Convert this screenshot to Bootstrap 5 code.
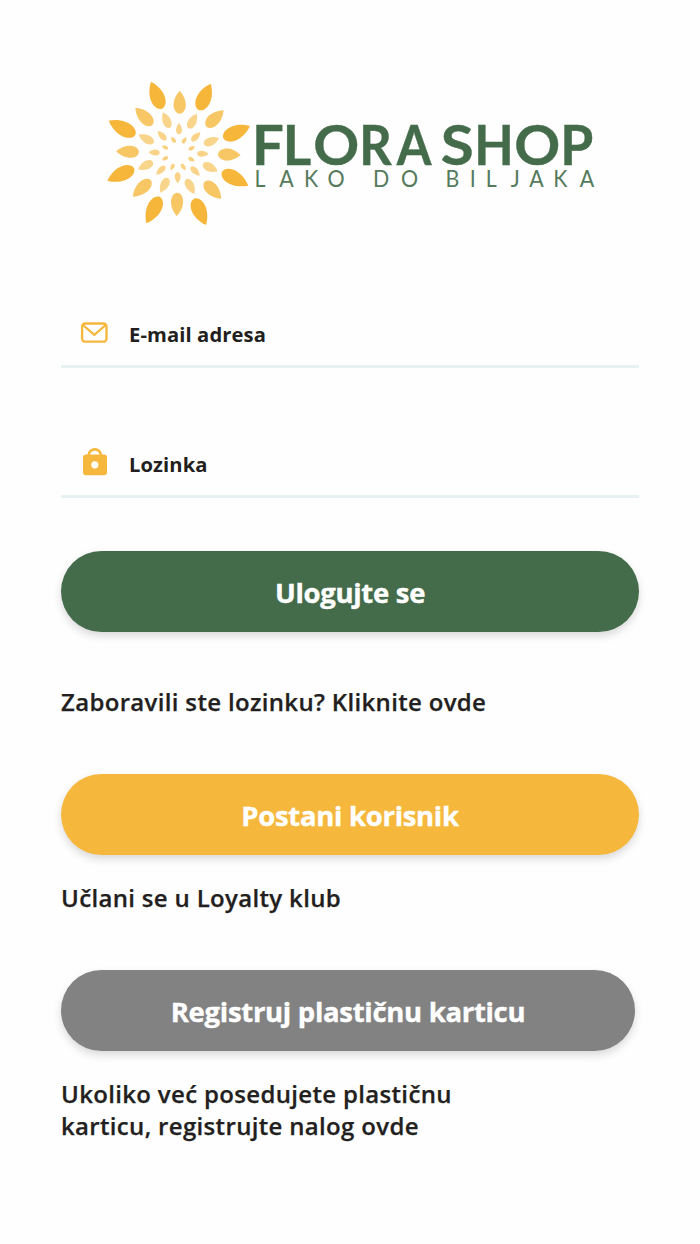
<!DOCTYPE html>
<html lang="sr-Latn">
<head>
<meta charset="utf-8">
<meta name="viewport" content="width=device-width, initial-scale=1">
<title>Flora Shop</title>
<link rel="stylesheet" href="https://cdn.jsdelivr.net/npm/bootstrap@5.3.0/dist/css/bootstrap.min.css">
<style>
body { font-family: "Open Sans", sans-serif; color: #231f20; background: #fefefe; }
.login-page { width: 700px; height: 1244px; padding: 70px 61px 0; }
.brand-logo { width: 578px; height: 165px; }
.brand-logo text { font-family: Lato, sans-serif; fill: #446c4b; }
.brand-name { font-size: 56.2px; font-weight: 700; stroke: #446c4b; stroke-width: .4px; }
.brand-tag { font-size: 23px; font-weight: 400; opacity: .9; }
.field-row { height: 73px; border-bottom: 3px solid #e8f1f1; padding-left: 19px; }
.field-row + .field-row { margin-top: 57px; }
.field-row svg { margin-top: 3px; }
.field-row label { font-size: 20.2px; font-weight: 700; line-height: 30px; letter-spacing: .1px; margin: 7px 0 0 21px; }
.btn-pill { height: 81px; font-size: 27.5px; font-weight: 700; letter-spacing: -.3px; -webkit-text-stroke: .4px #fff; color: #fff; box-shadow: 0 4px 8px rgba(0,0,0,.15); padding: 2px 0 0; border: 0; }
.btn-login { background: #446c4b; }
.btn-join { background: #f5b83d; }
.btn-card { background: #828282; width: 574px; }
.note { font-size: 24px; font-weight: 600; line-height: 32px; letter-spacing: .33px; -webkit-text-stroke: .25px #231f20; }
</style>
</head>
<body>
<main class="login-page d-flex flex-column">
  <svg class="brand-logo flex-shrink-0" viewBox="61 70 578 165" role="img" aria-label="Flora Shop">
    <g id="sunburst" transform="translate(100 70) scale(.33333)"></g>
    <text id="name" class="brand-name" y="164.7"></text>
    <text class="brand-tag" y="187" transform="scale(.93 1)" x="273.7 300.2 326.8 352.1 370 401 431.2 450 479 505 522.4 549.2 569.2 595 623.5">LAKO DO BILJAKA</text>
  </svg>

  <form class="d-flex flex-column" style="margin-top:60px">
    <div class="field-row d-flex align-items-center">
      <svg width="28" height="30" viewBox="80 317 28 30" fill="none" stroke="#f5b83d" stroke-width="2.3" stroke-linejoin="round">
        <rect x="82.1" y="323.5" width="24.4" height="18.2" rx="3"/><path d="M83 325l11.3 9.8L105.7 325"/>
      </svg>
      <label>E-mail adresa</label>
    </div>
    <div class="field-row d-flex align-items-center">
      <svg width="28" height="30" viewBox="80 447 28 30">
        <path d="M88.8 457v-2.2a6 5.5 0 0 1 12 0v2.2" fill="none" stroke="#f5b83d" stroke-width="2.7"/>
        <rect x="83" y="454.5" width="24" height="20.7" rx="3" fill="#f5b83d"/><circle cx="94.8" cy="464.8" r="3.6" fill="#fff"/>
      </svg>
      <label>Lozinka</label>
    </div>
    <button type="button" class="btn btn-pill btn-login rounded-pill w-100" style="margin-top:53px"><span>Ulogujte se</span></button>
  </form>

  <p class="note mb-0" style="margin-top:54px"><span>Zaboravili ste lozinku? Kliknite ovde</span></p>
  <button type="button" class="btn btn-pill btn-join rounded-pill w-100" style="margin-top:56px"><span>Postani korisnik</span></button>
  <p class="note mb-0" style="margin-top:27px"><span>Učlani se u Loyalty klub</span></p>
  <button type="button" class="btn btn-pill btn-card rounded-pill" style="margin-top:56px"><span>Registruj plastičnu karticu</span></button>
  <p class="note mb-0" style="margin-top:27px"><span>Ukoliko već posedujete plastičnu</span><br><span>karticu, registrujte nalog ovde</span></p>
</main>
<script src="https://cdn.jsdelivr.net/npm/bootstrap@5.3.0/dist/js/bootstrap.bundle.min.js"></script>
<script>
const NS = 'http://www.w3.org/2000/svg';
// Wordmark letters: start x and advance width, for the wide geometric lettering.
function setLetters(id, letters) {
  const t = document.getElementById(id);
  for (const [ch, x, len] of letters) {
    if (ch === ' ') { t.append(' '); continue; }
    const s = document.createElementNS(NS, 'tspan');
    s.textContent = ch;
    s.setAttribute('x', x);
    if (len) { s.setAttribute('textLength', len); s.setAttribute('lengthAdjust', 'spacingAndGlyphs'); }
    t.append(s);
  }
}
setLetters('name', [['F',252],['L',282.8,28.5],['O',313.2,46],['R',359.2,32.5],['A',396.8,33],[' '],['S',440.8,33],['H',474.3,39.5],['O',514.2,46],['P',560.2,33]]);

// Each petal: tip x, tip y, base x, base y; rings run from the outside in.
const rings = [
  ['#f5b63a', 46, [[153,35,186,116],[332,41,296,120],[450,168,370,205],[445,347,366,305],[318,465,282,386],[139,460,180,381],[22,332,102,295],[26,152,106,195]]],
  ['#f7c765', 39, [[239,62,239,131],[371,121,319,170],[422,255,354,253],[364,386,314,335],[230,438,232,368],[98,380,152,330],[48,244,117,246],[106,113,157,165]]],
  ['#f9d58c', 27, [[189,127,209,174],[290,131,266,175],[357,204,312,223],[353,304,309,282],[283,372,259,327],[181,368,204,324],[114,298,159,276],[116,194,161,218]]],
  ['#f9d387', 19, [[237,159,237,193],[301,187,275,213],[326,252,291,251],[299,317,273,290],[233,340,233,307],[169,314,195,288],[146,247,179,248],[173,183,198,210]]],
  ['#f9d080', 12, [[214,200,226,218],[259,202,247,220],[285,230,266,239],[284,273,265,263],[257,301,244,282],[212,300,222,282],[186,271,204,260],[186,227,204,237]]]
];
const burst = document.getElementById('sunburst');
for (const [fill, w, petals] of rings) for (const [tx, ty, bx, by] of petals) {
  const l = Math.hypot(tx - bx, ty - by), a = Math.atan2(ty - by, tx - bx) * 180 / Math.PI;
  const p = document.createElementNS(NS, 'path');
  p.setAttribute('d', `M0 0C${.03*l} ${.52*w} ${.55*l} ${.72*w} ${l} 0C${.55*l} ${-.72*w} ${.03*l} ${-.52*w} 0 0Z`);
  p.setAttribute('transform', `translate(${bx} ${by}) rotate(${a})`);
  p.setAttribute('fill', fill);
  burst.appendChild(p);
}
</script>
</body>
</html>
